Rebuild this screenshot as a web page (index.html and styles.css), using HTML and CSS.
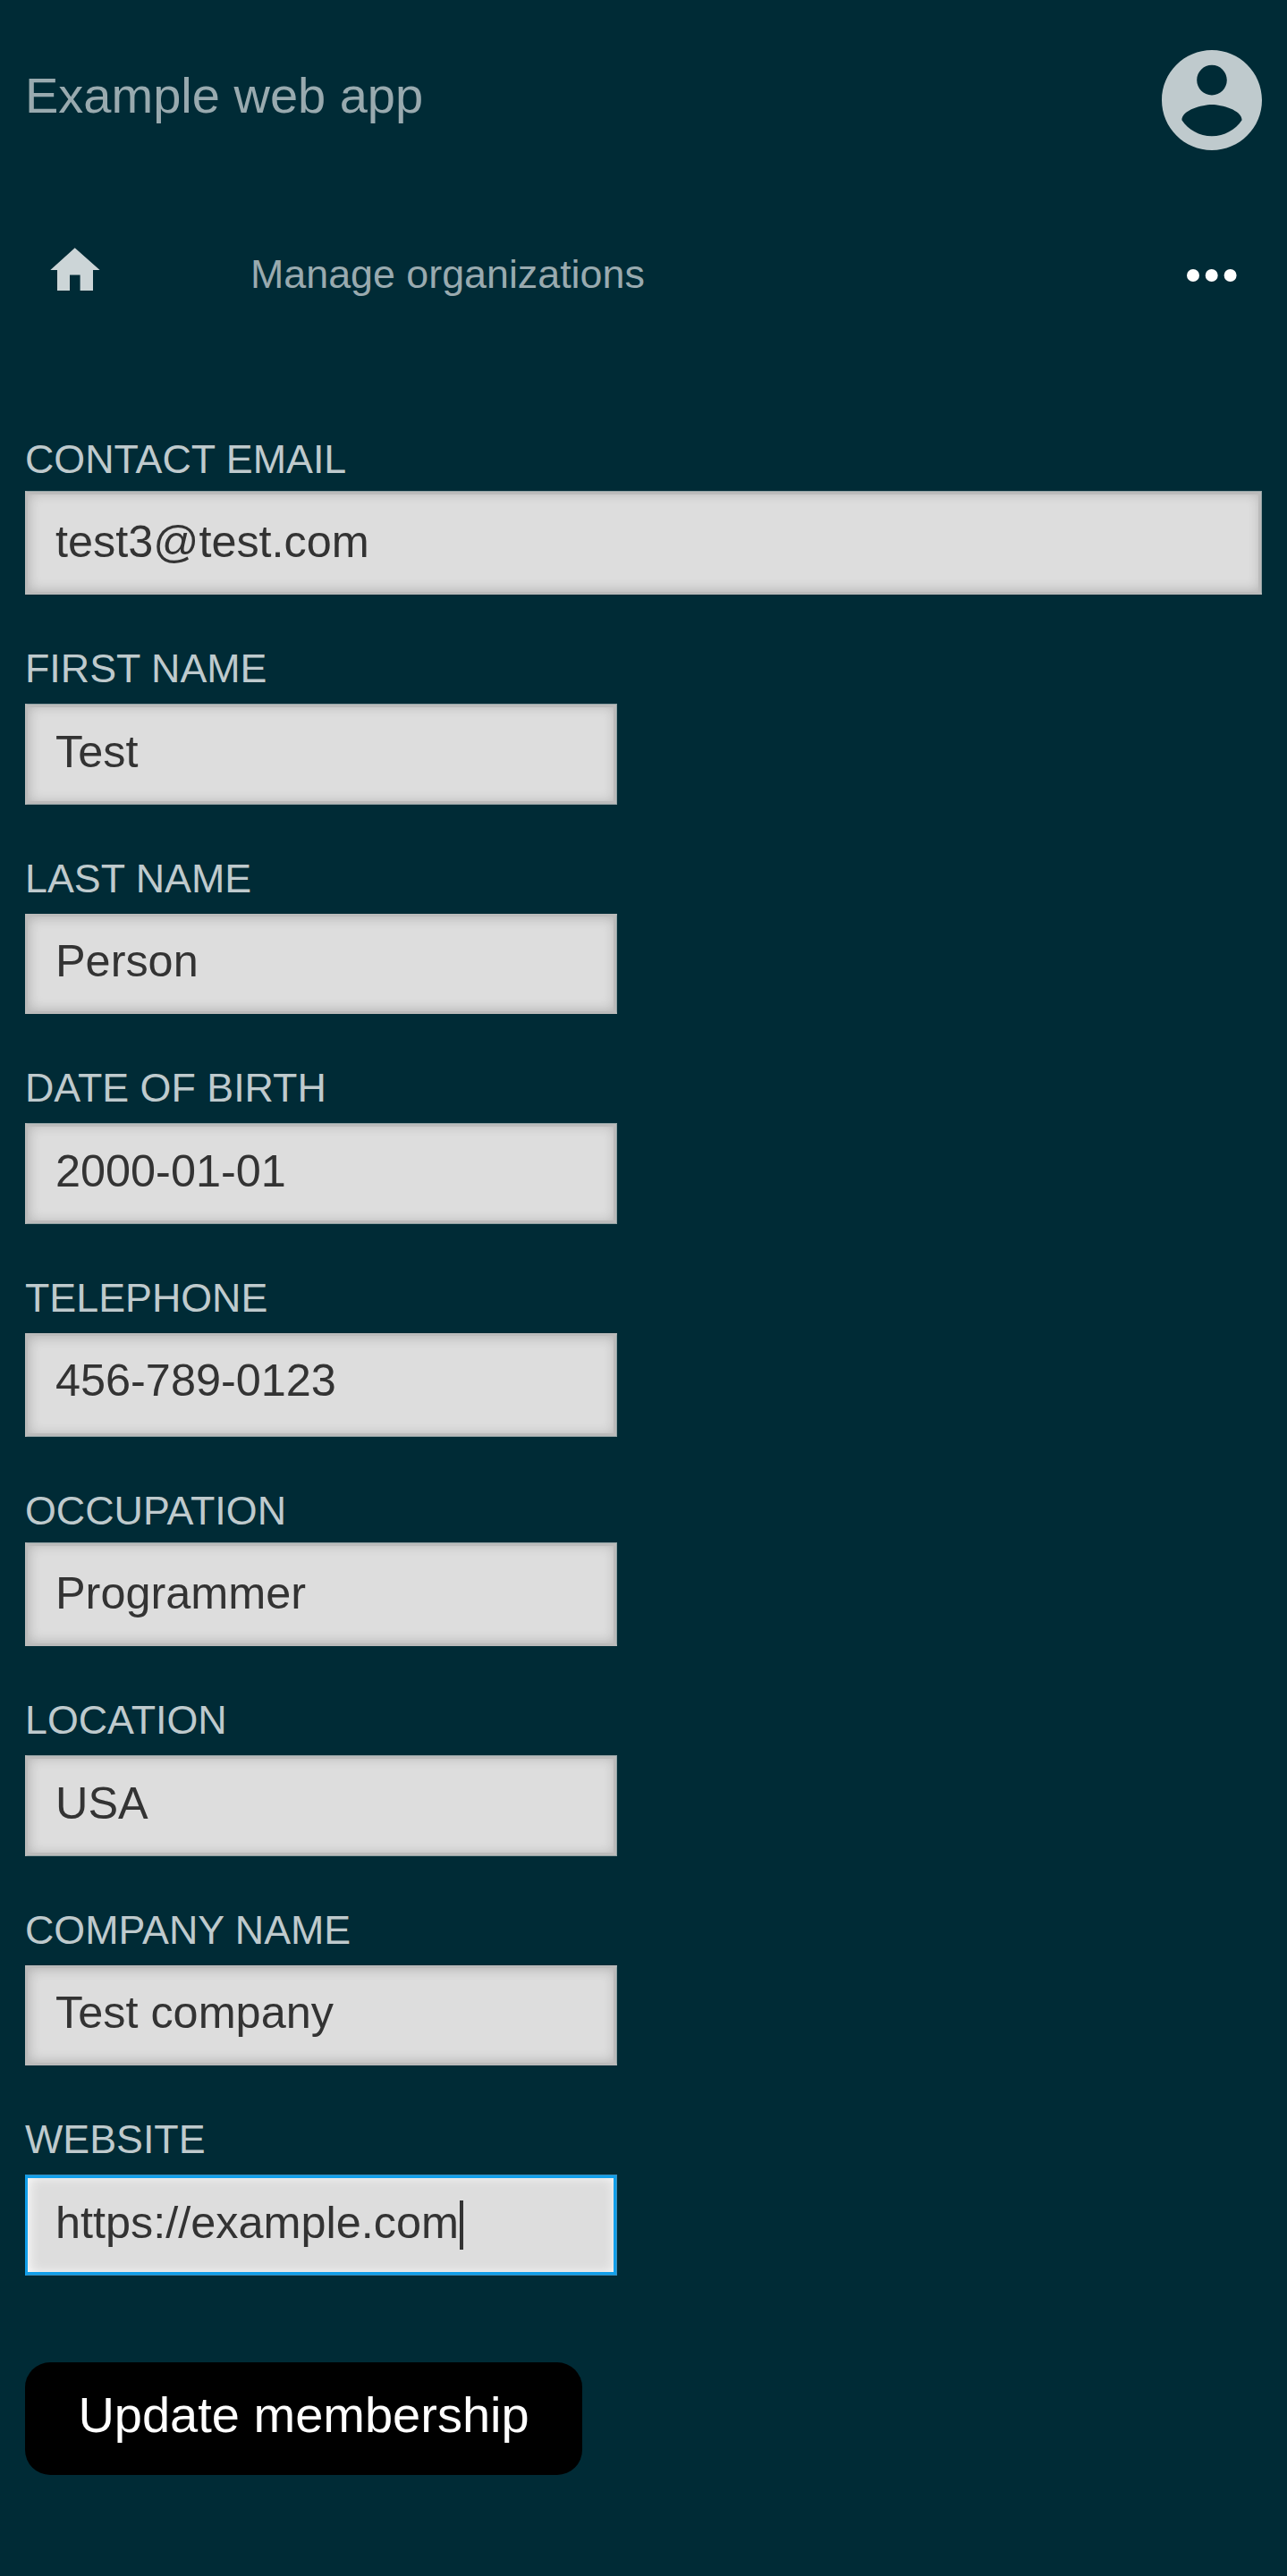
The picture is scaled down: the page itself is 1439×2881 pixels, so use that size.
FILE: index.html
```
<!DOCTYPE html>
<html lang="en">
<head>
<meta charset="utf-8">
<title>Example web app</title>
<link rel="stylesheet" href="styles.css">
</head>
<body>
<header class="header">
  <h1 class="title">Example web app</h1>
  <svg class="avatar" viewBox="2 2 20 20"><path d="M12 2C6.48 2 2 6.48 2 12s4.48 10 10 10 10-4.480 10-10S17.520 2 12 2zm0 3c1.660 0 3 1.340 3 3s-1.340 3-3 3-3-1.340-3-3 1.340-3 3-3zm0 14.200c-2.500 0-4.710-1.280-6-3.220.030-1.990 4-3.080 6-3.080 1.990 0 5.970 1.090 6 3.080-1.290 1.940-3.500 3.220-6 3.220z"/></svg>
</header>
<nav class="nav">
  <svg class="home" viewBox="0 0 56 48"><path d="M27.700 0.300L55.600 25H48V48H33.600V30.500H22V48H8V25H0.300Z"/></svg>
  <span class="nav-link">Manage organizations</span>
  <svg class="more" viewBox="0 0 56 14"><circle cx="7" cy="7" r="7"/><circle cx="27.700" cy="7" r="7"/><circle cx="48.600" cy="7" r="7"/></svg>
</nav>
<form class="form">
  <label class="field wide raised"><span class="label">Contact email</span><span class="input edge-top">test3@test.com</span></label>
  <label class="field"><span class="label">First name</span><span class="input edge-top edge-bottom">Test</span></label>
  <label class="field"><span class="label">Last name</span><span class="input">Person</span></label>
  <label class="field"><span class="label">Date of birth</span><span class="input edge-top edge-bottom">2000-01-01</span></label>
  <label class="field tall"><span class="label">Telephone</span><span class="input edge-bottom">456-789-0123</span></label>
  <label class="field raised"><span class="label">Occupation</span><span class="input edge-top">Programmer</span></label>
  <label class="field"><span class="label">Location</span><span class="input edge-top edge-bottom">USA</span></label>
  <label class="field"><span class="label">Company name</span><span class="input">Test company</span></label>
  <label class="field"><span class="label">Website</span><span class="input edge-top edge-bottom focused">https://example.com<i class="caret"></i></span></label>
  <button class="submit" type="button">Update membership</button>
</form>
</body>
</html>
```
FILE: styles.css
```
* { box-sizing: border-box; }
body {
  margin: 0;
  height: 2881px;
  padding: 0 28px;
  background: #002b36;
  color: #99aaaf;
  font-family: "Liberation Sans", Arial, sans-serif;
}
.header { display: flex; justify-content: space-between; padding-top: 56px; height: 224px; }
.title { margin: 19px 0 0; font-size: 56px; line-height: 64px; font-weight: 400; }
.avatar { width: 112px; height: 112px; fill: #bfcacd; }
.nav { display: flex; height: 168px; padding: 53px 28px 0; }
.home { width: 56px; height: 48px; fill: #ccd5d7; }
.nav-link { margin: 3px auto 0 168px; font-size: 44.8px; line-height: 52px; }
.more { width: 56px; height: 14px; margin-top: 24px; fill: #fff; }
.form { padding-top: 94.9px; }
.field { display: block; width: 662px; height: 234.5px; }
.field.wide { width: 1383px; }
.field.tall { height: 238px; }
.label { display: block; height: 65.8px; font-size: 44.8px; line-height: 52px; text-transform: uppercase; color: #bfcacd; }
.raised .label { height: 62.3px; }
.input {
  --line: #bbb;
  --edge: #93a3a5;
  --glow: rgba(0, 0, 0, .2);
  --top: 0px;
  --bottom: 0px;
  --pad: 21.6px;
  display: flex;
  height: 112.5px;
  padding: var(--pad) 31px 0;
  border: 3px solid var(--line);
  border-right: 1px solid var(--edge);
  background: #ddd;
  box-shadow:
    inset -3px 0 0 var(--line),
    inset 0 var(--top) 0 var(--line),
    inset 0 calc(0px - var(--bottom)) 0 var(--line),
    inset 0 0 14px 1px var(--glow);
  font-size: 50.4px;
  line-height: 58px;
  color: #333;
}
.raised .input { --pad: 24.7px; height: 116px; }
.tall .input { height: 116px; }
.edge-top { --top: 3px; border-top: 1px solid var(--edge); padding-top: calc(var(--pad) + 2px); }
.edge-bottom { --bottom: 3px; border-bottom: 1px solid var(--edge); }
.focused { --line: #129fea; --edge: #3a8fbd; --glow: #fff; }
.caret { width: 4px; height: 55px; margin: 4px 0 0 1px; background: #333; }
.submit {
  display: block;
  width: 623px;
  height: 126px;
  margin-top: 41.4px;
  padding: 0 0 9px;
  border: 0;
  border-radius: 28px;
  background: #000;
  color: #fff;
  font: 56px "Liberation Sans", Arial, sans-serif;
}
```
